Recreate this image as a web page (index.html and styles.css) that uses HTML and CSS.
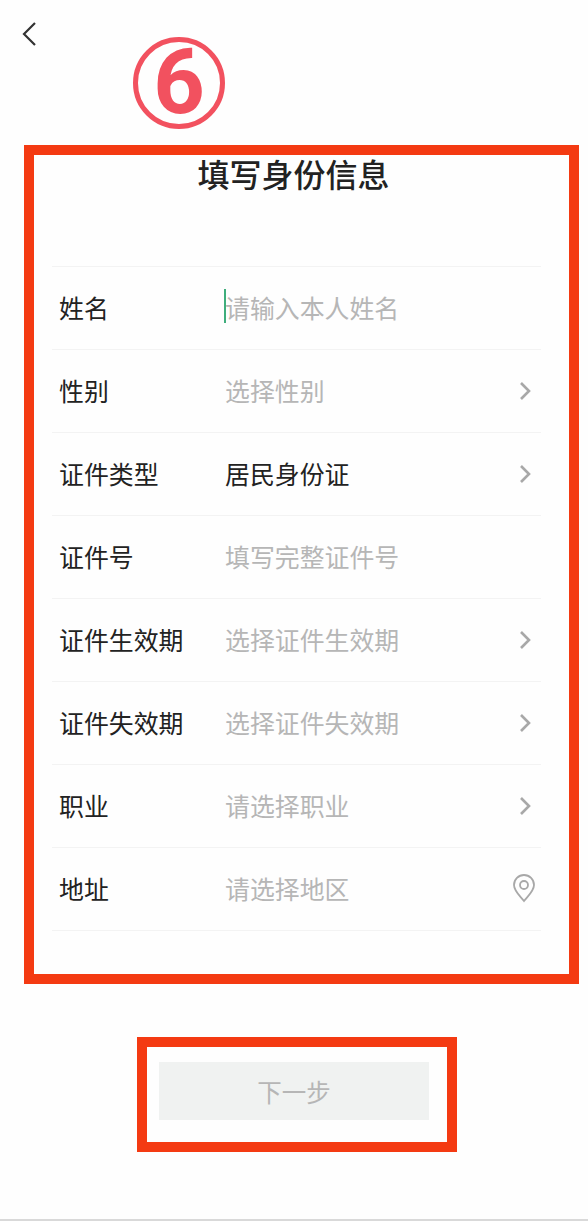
FILE: index.html
```html
<!DOCTYPE html>
<html lang="zh-CN">
<head>
<meta charset="utf-8">
<title>填写身份信息</title>
<link rel="stylesheet" href="styles.css">
</head>
<body>
<div class="page">
  <header class="top">
    <svg class="back" viewBox="0 0 16 26" width="16" height="26"><path d="M14 2 L3 13 L14 24" fill="none" stroke="#333" stroke-width="2.2"/></svg>
    <div class="step"><span>6</span></div>
  </header>
  <section class="form-box">
    <h1 class="title">填写身份信息</h1>
    <div class="rows">
      <div class="row"><span class="label">姓名</span><span class="value hint"><i class="caret"></i>请输入本人姓名</span></div>
      <div class="row"><span class="label">性别</span><span class="value hint">选择性别</span><svg class="chev" viewBox="0 0 12 20" width="12" height="20"><path d="M2 2 L10 10 L2 18" fill="none" stroke="#a8a8a8" stroke-width="2.6"/></svg></div>
      <div class="row"><span class="label">证件类型</span><span class="value">居民身份证</span><svg class="chev" viewBox="0 0 12 20" width="12" height="20"><path d="M2 2 L10 10 L2 18" fill="none" stroke="#a8a8a8" stroke-width="2.6"/></svg></div>
      <div class="row"><span class="label">证件号</span><span class="value hint">填写完整证件号</span></div>
      <div class="row"><span class="label">证件生效期</span><span class="value hint">选择证件生效期</span><svg class="chev" viewBox="0 0 12 20" width="12" height="20"><path d="M2 2 L10 10 L2 18" fill="none" stroke="#a8a8a8" stroke-width="2.6"/></svg></div>
      <div class="row"><span class="label">证件失效期</span><span class="value hint">选择证件失效期</span><svg class="chev" viewBox="0 0 12 20" width="12" height="20"><path d="M2 2 L10 10 L2 18" fill="none" stroke="#a8a8a8" stroke-width="2.6"/></svg></div>
      <div class="row"><span class="label">职业</span><span class="value hint">请选择职业</span><svg class="chev" viewBox="0 0 12 20" width="12" height="20"><path d="M2 2 L10 10 L2 18" fill="none" stroke="#a8a8a8" stroke-width="2.6"/></svg></div>
      <div class="row"><span class="label">地址</span><span class="value hint">请选择地区</span><svg class="pin" viewBox="0 0 24 30" width="24" height="30"><path d="M12 28 C8 23 2 18 2 12 A10 10 0 0 1 22 12 C22 18 16 23 12 28 Z" fill="none" stroke="#a8a8a8" stroke-width="1.8"/><circle cx="12" cy="12" r="4" fill="none" stroke="#a8a8a8" stroke-width="1.8"/></svg></div>
    </div>
  </section>
  <div class="action-box"><button class="next" type="button">下一步</button></div>
  <div class="home-line"></div>
</div>
</body>
</html>
```
FILE: styles.css
```css
* { box-sizing: border-box; }
html, body { margin: 0; padding: 0; background: #fff; }
body { font-family: "Noto Sans CJK SC", "Liberation Sans", sans-serif; }
.page { width: 588px; height: 1221px; display: flex; flex-direction: column; overflow: hidden; background: #fefefe; }
.top { height: 145px; display: flex; align-items: flex-start; padding: 21px 0 0 21px; }
.back { flex: none; }
.step { flex: none; width: 92px; height: 92px; margin: 16px 0 0 96px; border: 5px solid #f2515f; border-radius: 50%; display: flex; align-items: center; justify-content: center; }
.step span { font-family: Roboto, "Liberation Sans", sans-serif; font-weight: 700; font-size: 90px; line-height: 1; color: #f2515f; }
.form-box { width: 555px; height: 839px; margin-left: 24px; border: 10px solid #f43a12; padding: 0 28px 0 18px; display: flex; flex-direction: column; }
.title { margin: 0 0 0 -6px; height: 40px; font-size: 32px; line-height: 36px; font-weight: 500; color: #222; text-align: center; }
.rows { margin-top: 71px; border-top: 1px solid #f3f3f3; }
.row { height: 83px; border-bottom: 1px solid #f3f3f3; display: flex; align-items: center; padding: 0 7px 2px; font-size: 24.9px; }
.label { width: 166px; flex: none; color: #222; }
.value { flex: 1; color: #222; position: relative; }
.hint { color: #b6b6b6; }
.caret { position: absolute; left: -1px; top: 0; width: 2px; height: 34px; background: #3fae7c; }
.chev { flex: none; margin: 2px 3px 0 0; }
.pin { flex: none; margin: 0 -2px 0 0; }
.action-box { width: 320px; height: 115px; margin: 53px 0 0 137px; border: 10px solid #f43a12; padding: 15px 12px 0; }
.next { display: block; width: 270px; height: 58px; border: 0; padding: 0; background: #f0f2f1; color: #b6b6b6; font-family: inherit; font-size: 24.5px; }
.home-line { margin-top: auto; height: 2px; background: #d9d9d9; }
```
